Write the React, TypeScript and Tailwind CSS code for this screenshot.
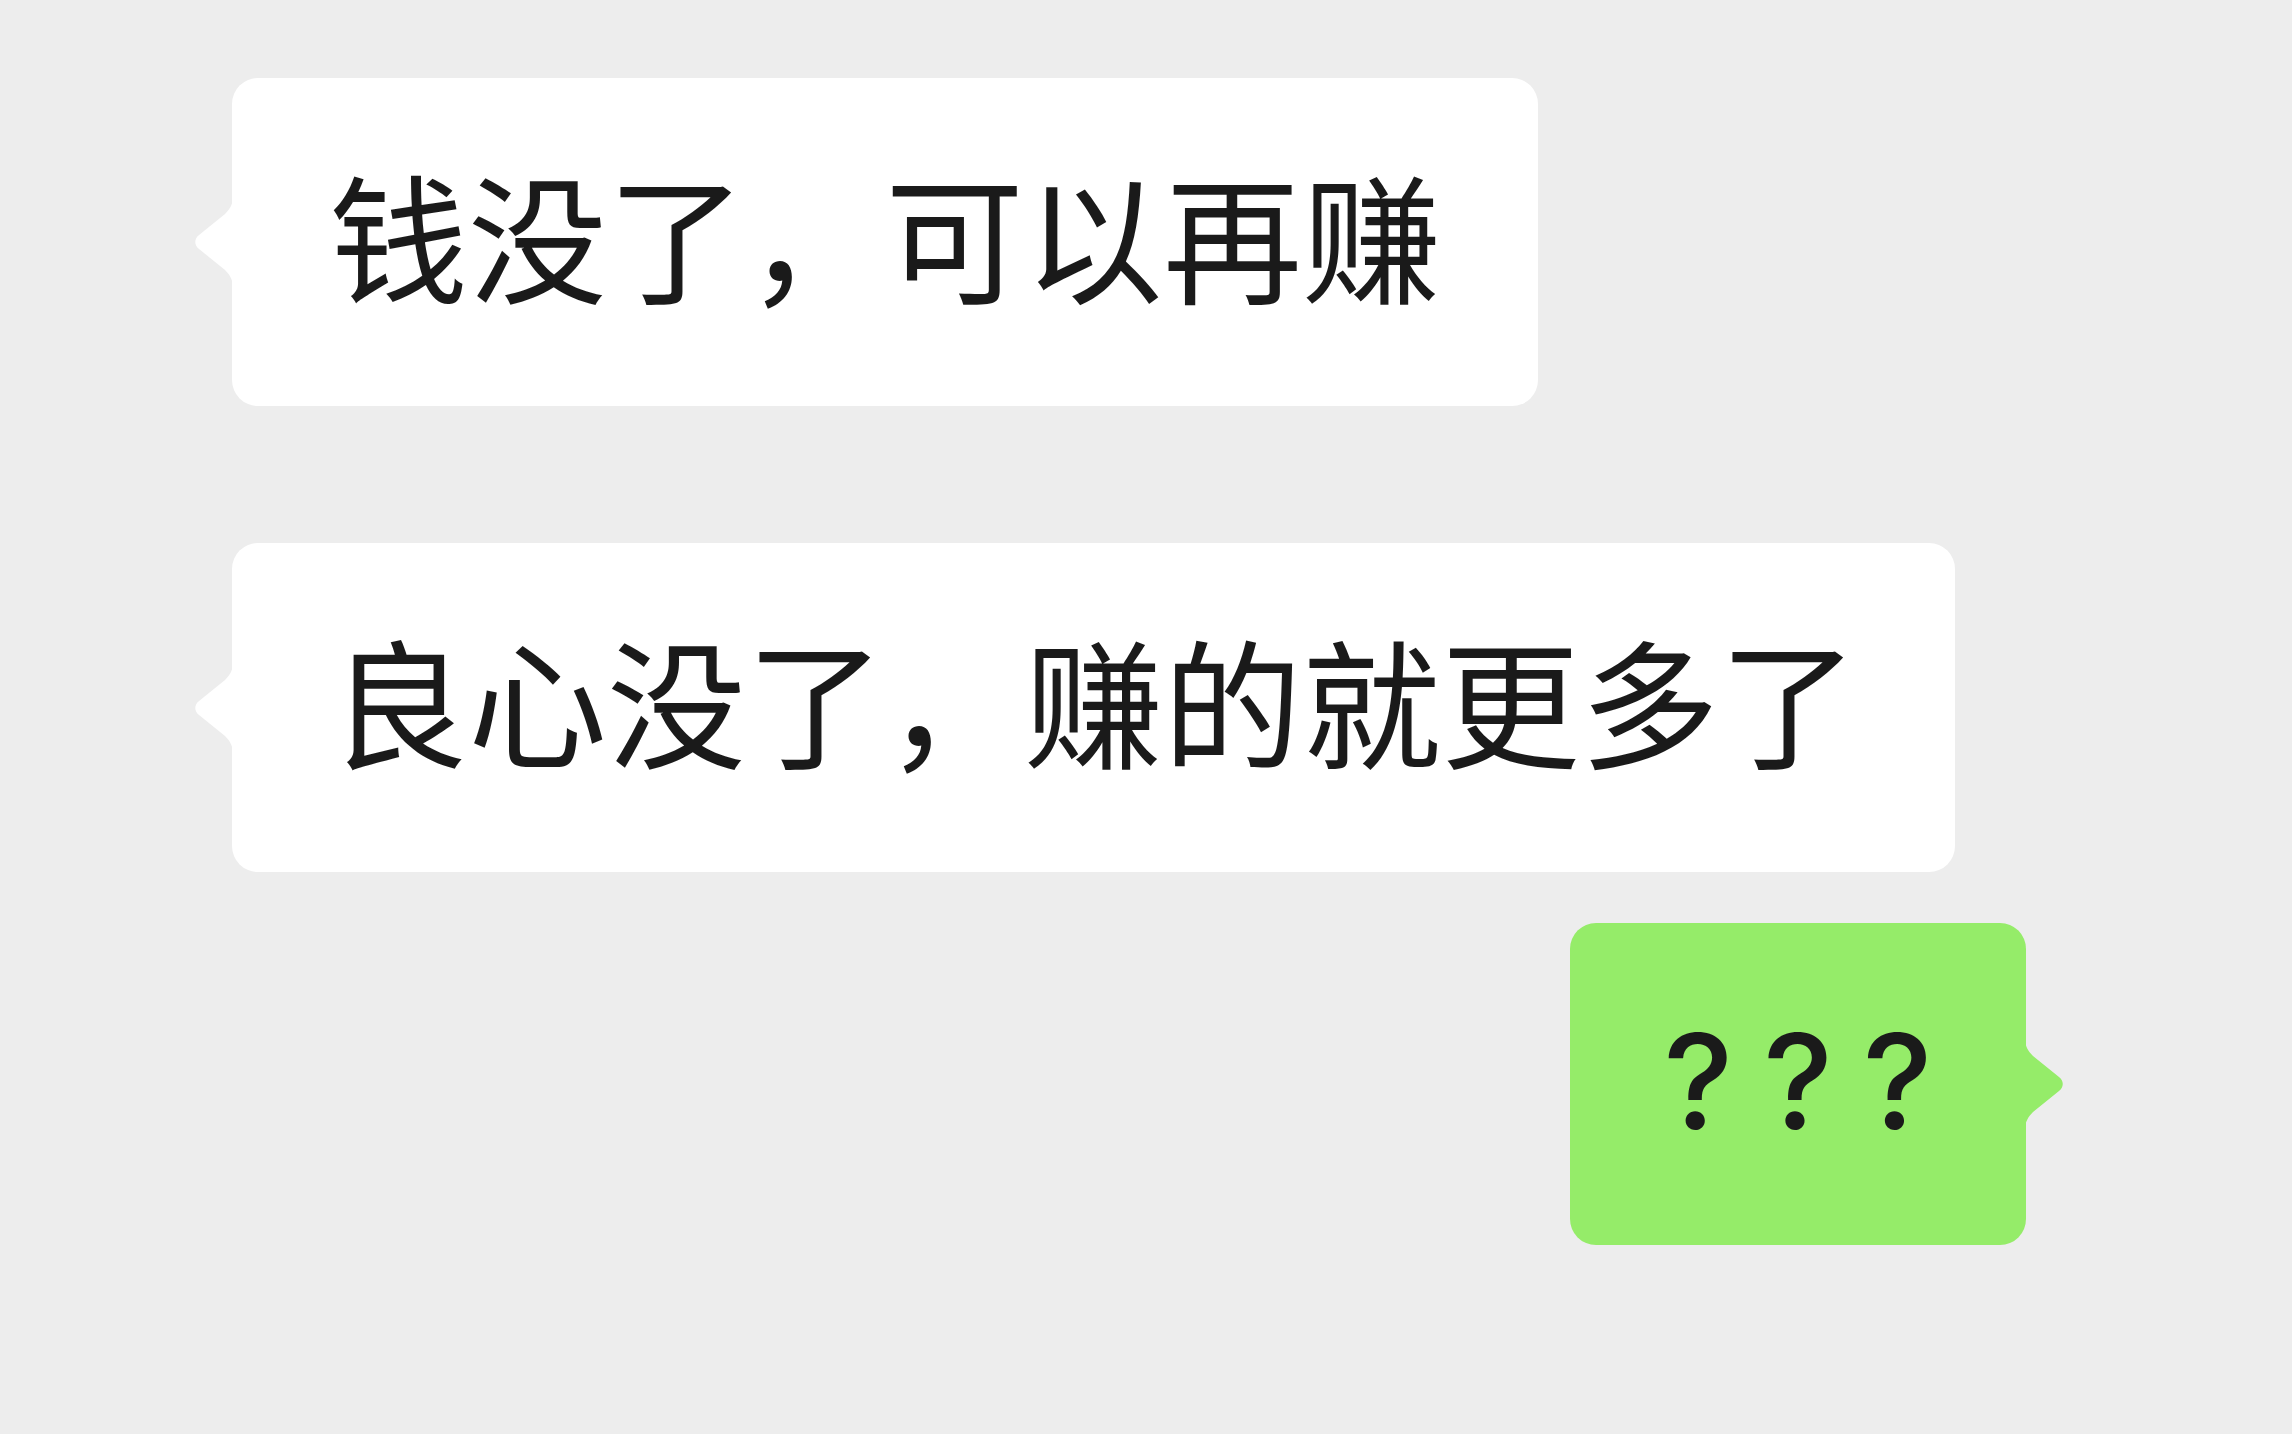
import React from "react";

const font = { fontFamily: '"Noto Sans CJK SC", "Noto Sans", sans-serif' };
const qfont = { fontFamily: 'Inter, Roboto, sans-serif' };

function LeftTail({ color }: { color: string }) {
  return (
    <svg
      className="absolute left-[-39px] top-1/2 -translate-y-1/2"
      width="40"
      height="92"
      viewBox="0 0 40 92"
    >
      <path
        d="M40 0 C40 8 37 13 32 18 L6 39 C1 43 1 49 6 53 L32 74 C37 79 40 84 40 92 Z"
        fill={color}
      />
    </svg>
  );
}

function RightTail({ color }: { color: string }) {
  return (
    <svg
      className="absolute right-[-39px] top-1/2 -translate-y-1/2"
      width="40"
      height="92"
      viewBox="0 0 40 92"
    >
      <path
        d="M0 0 C0 8 3 13 8 18 L34 39 C39 43 39 49 34 53 L8 74 C3 79 0 84 0 92 Z"
        fill={color}
      />
    </svg>
  );
}

export default function App() {
  return (
    <div
      className="min-h-[1434px] w-full bg-[#ededed] pt-[78px] pl-[232px] pr-[266px] flex flex-col"
      style={font}
    >
      <div className="flex">
        <div className="relative h-[328px] flex items-center bg-white rounded-[26px] px-[97px]">
          <LeftTail color="#ffffff" />
          <span className="text-[139px] font-normal leading-none text-[#1a1a1a] whitespace-nowrap mb-[20px]">
            钱没了，可以再赚
          </span>
        </div>
      </div>

      <div className="flex mt-[137px]">
        <div className="relative h-[329px] flex items-center bg-white rounded-[26px] px-[97px]">
          <LeftTail color="#ffffff" />
          <span className="text-[139px] font-normal leading-none text-[#1a1a1a] whitespace-nowrap mb-[20px]">
            良心没了，赚的就更多了
          </span>
        </div>
      </div>

      <div className="flex justify-end mt-[51px]">
        <div className="relative h-[322px] w-[456px] flex items-center justify-center bg-[#95ec69] rounded-[26px]">
          <RightTail color="#95ec69" />
          <span
            className="text-[132px] font-medium leading-none text-[#1a1a1a] whitespace-nowrap tracking-[30px] pl-[30px] mb-[6px]"
            style={qfont}
          >
            ???
          </span>
        </div>
      </div>
    </div>
  );
}
